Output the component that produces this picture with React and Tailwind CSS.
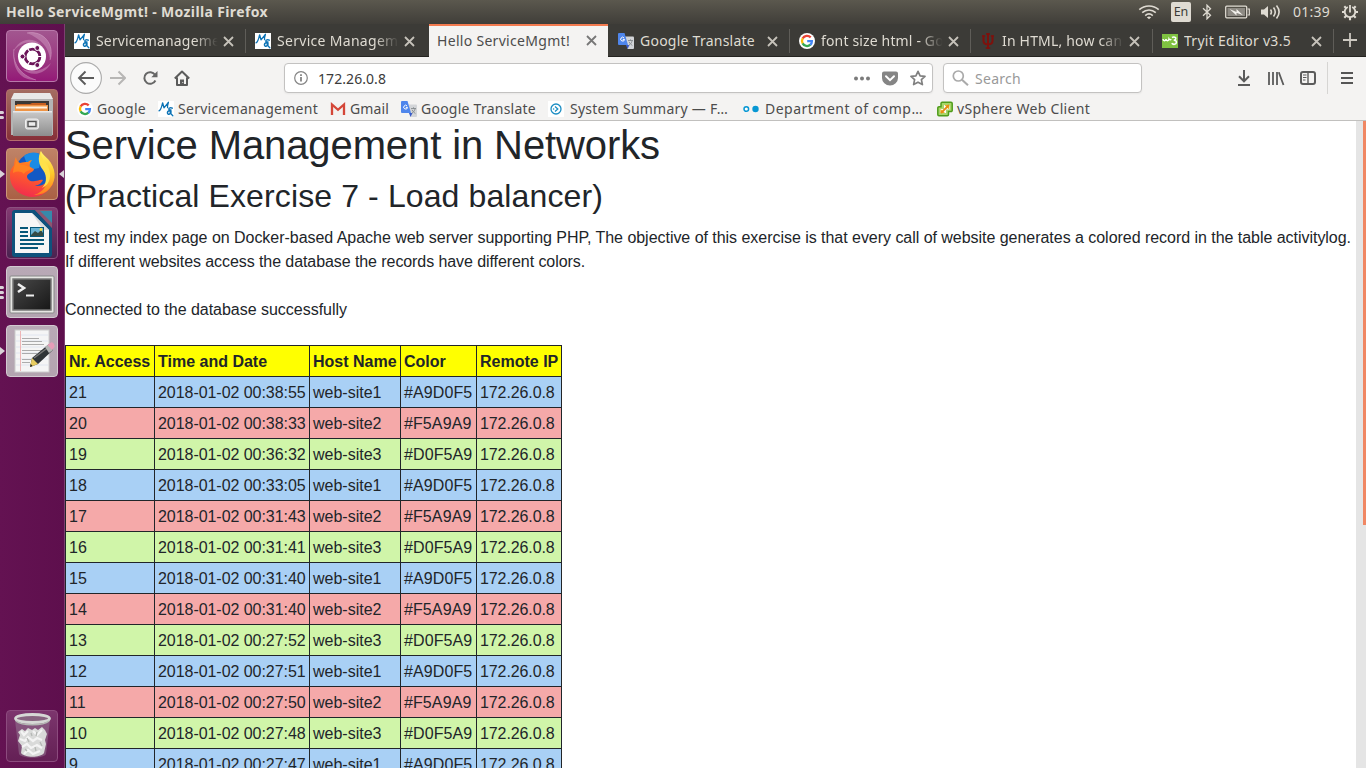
import React, { useLayoutEffect, useRef, useState } from 'react';

/* Label whose tracking is adjusted so that it fills a given width. */
function Fit({ w, className = '', children }) {
  const ref = useRef(null);
  const [spacing, setSpacing] = useState(0);
  useLayoutEffect(() => {
    const natural = ref.current.getBoundingClientRect().width;
    setSpacing((w - natural) / String(children).length);
  }, []);
  return (
    <span ref={ref} className={`inline-block shrink-0 whitespace-pre ${className}`} style={{ letterSpacing: spacing }}>
      {children}
    </span>
  );
}

function MrIcon() {
  return (
    <svg width="16" height="16" viewBox="0 0 16 16" className="shrink-0">
      <rect width="16" height="16" fill="#fff" />
      <g fill="none" stroke="#0b72b5" strokeLinecap="round" strokeLinejoin="round">
        <path d="M1 9.800C2.600 9.300 4 4.500 4.600 1.800L6 6.800 10.400 1.300C9.700 3.500 9.200 5 9.600 6.600" strokeWidth="1.300" />
        <path d="M14.300 7.200c-1.700-1-3.600-.2-3.500.9.100.8 1.300 1 2.200.9-1.700.3-3.400 1.200-3.600 2.700-.2 1.800 1.800 2 2.900.9 1-1 1-2.500.200-2.600-.9 0-.3 2.700 2.300 4.800" strokeWidth="1.400" />
      </g>
    </svg>
  );
}

function GoogleIcon() {
  return (
    <svg width="16" height="16" viewBox="0 0 16 16" className="shrink-0">
      <circle cx="8" cy="8" r="8" fill="#fff" />
      <g fill="none" strokeWidth="2.300">
        <path d="M3.600 5.500A5 5 0 0 1 11.700 4.400" stroke="#ea4335" />
        <path d="M3.700 10.500A5 5 0 0 1 3.700 5.400" stroke="#fbbc05" />
        <path d="M11.400 11.700A5 5 0 0 1 3.600 10.400" stroke="#34a853" />
        <path d="M8.200 8.200H12.900C12.900 9.700 12.300 10.900 11.300 11.800" stroke="#4285f4" />
      </g>
    </svg>
  );
}

function TranslateIcon() {
  return (
    <svg width="16" height="16" viewBox="0 0 16 16" className="shrink-0">
      <path d="M7 3.500h8a1 1 0 0 1 1 1V15a1 1 0 0 1-1 1H9.500z" fill="#d3d5d8" />
      <path d="M9.500 16 8 12h3.500z" fill="#3a5bc7" />
      <path d="M1 0h5.500L10 12H1a1 1 0 0 1-1-1V1a1 1 0 0 1 1-1z" fill="#4f86ec" />
      <path d="M6.100 5A1.900 1.900 0 1 0 6.500 6.400H4.800" fill="none" stroke="#fff" strokeWidth="1" />
      <path d="M10 7.500h5M12.500 6.300v1.200M14.200 7.600c-.5 2.200-2 3.800-3.300 4.500M11 8.800c.7 1.600 2 2.900 3.400 3.700" fill="none" stroke="#7c8185" strokeWidth=".8" />
    </svg>
  );
}

function TridentIcon() {
  return (
    <svg width="16" height="16" viewBox="0 0 16 16" className="shrink-0">
      <g fill="none" stroke="#7d110c" strokeWidth="2">
        <path d="M8 0v16M3.500 2.500v5.200c0 2.600 1.300 3.600 4.500 3.600s4.500-1 4.500-3.600V2.500" />
        <path d="M2 3h3.200M10.800 3H14M6 1h4M5.800 15h4.400" strokeWidth="1.600" />
      </g>
    </svg>
  );
}

function W3Icon() {
  return (
    <svg width="16" height="16" viewBox="0 0 16 16" className="shrink-0">
      <rect y="1" width="16" height="14" fill="#7fc241" />
      <path d="M1 6c.2 2.200 2.700 2.200 3 .2.300 2 2.700 2 3-.2 .5 1 1.700.8 2.300.200" fill="none" stroke="#fff" strokeWidth="1.500" />
      <path d="M10 4.500c2-1 4.300-.3 3.700 1.500-.4 1-1.400 1.200-2 1.200 1.300 0 2.900.5 2.700 2.300-.3 2.200-3.300 2.400-4.700.8" fill="none" stroke="#fff" strokeWidth="1.600" />
    </svg>
  );
}

function Close({ dark }) {
  return (
    <svg width="11" height="11" viewBox="0 0 11 11" className="shrink-0">
      <path d="M1 1l9 9M10 1l-9 9" stroke={dark ? '#777' : '#c6c2ba'} strokeWidth="1.800" fill="none" />
    </svg>
  );
}

const tabs = [
  { t: 'Servicemanagement', n: 138, icon: <MrIcon />, cls: 'w-[181px] pl-[9px] border-r border-[#5f5d58]' },
  { t: 'Service Management', n: 144, icon: <MrIcon />, cls: 'w-[183px] pl-[9px]' },
  { t: 'Hello ServiceMgmt!', n: 133, active: true, cls: 'w-[179px] pl-2' },
  { t: 'Google Translate', n: 115, icon: <TranslateIcon />, cls: 'w-[182px] pl-[10px] border-r border-[#5f5d58]' },
  { t: 'font size html - Google', n: 152, icon: <GoogleIcon />, cls: 'w-[181px] pl-[9px] border-r border-[#5f5d58]' },
  { t: 'In HTML, how can I', n: 129, icon: <TridentIcon />, cls: 'w-[182px] pl-[9px] border-r border-[#5f5d58]' },
  { t: 'Tryit Editor v3.5', n: 107, icon: <W3Icon />, cls: 'w-[181px] pl-[9px] border-r border-[#5f5d58]' },
];

function Tab({ tab }) {
  if (tab.active) {
    return (
      <div className={`flex h-[33px] shrink-0 items-center border-t-2 border-[#f37b50] bg-[#f4f3f2] pr-[11px] pb-[2px] text-[#4c4c4c] ${tab.cls}`}>
        <div className="w-[150px]"><Fit w={tab.n}>{tab.t}</Fit></div>
        <Close dark />
      </div>
    );
  }
  const faded = tab.n > 120;
  return (
    <div className={`mt-[5px] flex h-6 shrink-0 items-center text-[#dfdbd2] ${tab.cls}`}>
      {tab.icon}
      <div className={`mr-1 ml-[6px] w-[123px] overflow-hidden ${faded ? '[mask-image:linear-gradient(to_right,#000_80%,transparent_99%)]' : ''}`}>
        <Fit w={tab.n}>{tab.t}</Fit>
      </div>
      <Close />
    </div>
  );
}

function SystemBar() {
  return (
    <header className="flex h-6 shrink-0 items-center bg-linear-to-b from-[#5b584e] to-[#403e39] pl-[6px] text-[#dfdbd2]">
      <Fit w={262} className="text-[14px] font-bold">Hello ServiceMgmt! - Mozilla Firefox</Fit>
      <div className="ml-auto flex h-6 items-center">
        <svg width="22" height="18" viewBox="0 0 22 18" className="mr-[11px]">
          <g fill="none" stroke="#dfdbd2" strokeWidth="1.600">
            <path d="M1.300 6.700C6.500 1.700 15.500 1.700 20.700 6.700M4.200 9.700c4-3.700 9.600-3.700 13.600 0M7.200 12.600c2.300-2 5.300-2 7.600 0" />
          </g>
          <path d="M8.800 14.300c1.500-1 2.900-1 4.400 0L11 16.300z" fill="#dfdbd2" />
        </svg>
        <div className="mr-[11px] flex h-5 w-5 items-center justify-center rounded-[2px] bg-[#dfdbd2] text-[12.500px] text-[#3c3b37]">En</div>
        <svg width="10" height="16" viewBox="0 0 10 16" className="mr-[13px]">
          <path d="M1 4.300l7.500 7L5 14.800V1.200l3.500 3.500-7.500 7" fill="none" stroke="#dfdbd2" strokeWidth="1.300" />
        </svg>
        <svg width="25" height="14" viewBox="0 0 25 14" className="mr-[10px]">
          <rect x=".7" y="1.200" width="21" height="11.600" rx="1" fill="none" stroke="#dfdbd2" strokeWidth="1.300" />
          <rect x="2.500" y="3" width="17.500" height="8" fill="#8d8a83" />
          <path d="M22.500 4h1.800v6h-1.800" fill="none" stroke="#dfdbd2" strokeWidth="1.200" />
          <path d="M4.500 4l7 3V4l6.500 6.300-6.500-2.600V10.500z" fill="#f3f1ec" />
        </svg>
        <svg width="21" height="16" viewBox="0 0 21 16" className="mr-[12px]">
          <path d="M1 5.500h3L8 2v12l-4-3.500H1z" fill="#dfdbd2" />
          <g fill="none" stroke="#dfdbd2" strokeWidth="1.600"><path d="M10.500 5.500c1.200 1.600 1.200 3.400 0 5M13.500 3.500c2.200 2.800 2.200 6.200 0 9M16.500 1.500c3.200 4 3.200 9 0 13" /></g>
        </svg>
        <Fit w={37} className="mr-[11px] text-[14px]">01:39</Fit>
        <svg width="18" height="18" viewBox="0 0 18 18" className="mr-[7px]">
          <path d="M6.800 4A5.300 5.300 0 1 0 11.200 4" fill="none" stroke="#dfdbd2" strokeWidth="1.900" />
          <path d="M9 2v7.500" stroke="#dfdbd2" strokeWidth="1.800" />
          <path d="M1 9h3M14 9h3M9 14v3.200M3.300 3.300l2.200 2.200M14.700 3.300l-2.200 2.200M3.300 14.700l2.200-2.200M14.700 14.700l-2.200-2.200" stroke="#dfdbd2" strokeWidth="2.100" />
        </svg>
      </div>
    </header>
  );
}

const tile = 'flex h-[52px] w-[52px] shrink-0 items-center justify-center overflow-hidden rounded-[4px] border';

function Arrow({ left }) {
  return (
    <svg width="5" height="8" viewBox="0 0 5 8" className="shrink-0">
      <path d={left ? 'M5 0v8L0 4z' : 'M0 0v8l5-4z'} fill="#d9d3d8" />
    </svg>
  );
}

function Pips({ n }) {
  return (
    <div className="flex w-[5px] shrink-0 flex-col gap-[2px]">
      {Array.from({ length: n }, (_, i) => <div key={i} className="h-[3px] w-[4px] rounded-r-full bg-[#d9d3d8]" />)}
    </div>
  );
}

function Slot({ mark, end, children }) {
  return (
    <div className="flex h-[52px] w-16 shrink-0 items-center">
      <div className="w-[6px]">{mark}</div>
      {children}
      <div className="flex w-[6px] justify-end">{end}</div>
    </div>
  );
}

function Launcher() {
  return (
    <aside className="flex w-[65px] shrink-0 flex-col gap-[7px] border-r border-[#7d3f70] bg-linear-to-r from-[#641252] to-[#5e0f4d] pt-[6px] pb-[6px]">
      <Slot>
        <div className={`${tile} border-[#b878aa] bg-linear-to-b from-[#a2568f] to-[#941877]`}>
          <svg width="50" height="50" viewBox="0 0 50 50">
            <path d="M20 2c17-3 28 12 23 27-1-13-9-21-23-27zM7 18c-2 14 6 26 22 31C14 50 4 38 7 18zM6 21C12 8 24 5 35 14 24 9 13 11 6 21zM44 32C38 44 24 46 15 38c11 4 21 2 29-6z" fill="#dca9ce" opacity=".42" />
            <path d="M20 2c17-3 28 12 23 27M7 18c-2 14 6 26 22 31" fill="none" stroke="#d9a6cc" opacity=".5" />
            <circle cx="25" cy="25.500" r="14" fill="#fff" />
            <circle cx="25.500" cy="25.500" r="7.400" fill="none" stroke="#6b1559" strokeWidth="2.900" />
            <path d="M25.500 25.500H35M25.500 25.500L20.700 17.500M25.500 25.500L20.700 34" stroke="#fff" strokeWidth="1.200" />
            <circle cx="25.500" cy="25.500" r="5.500" fill="#fff" />
            <g fill="#6b1559" stroke="#fff" strokeWidth="1"><circle cx="15.500" cy="25.500" r="2.500" /><circle cx="30.300" cy="17" r="2.500" /><circle cx="30.300" cy="34" r="2.500" /></g>
          </svg>
        </div>
      </Slot>
      <Slot mark={<Pips n={2} />}>
        <div className={`${tile} border-[#b66d6d] bg-linear-to-b from-[#a46d62] to-[#862f38]`}>
          <svg width="50" height="50" viewBox="0 0 50 50">
            <defs><linearGradient id="cab" x2="0" y2="1"><stop stopColor="#cacaca" /><stop offset="1" stopColor="#8d8d8d" /></linearGradient></defs>
            <path d="M7 3h36l3 7v35H4V10z" fill="#b4b4b4" /><path d="M7 3h36l3 6H4z" fill="#e9e9e9" />
            <rect x="8" y="11" width="34" height="12" fill="#3b3835" />
            <path d="M10 14h13l2-1h14v7H10z" fill="#c65f20" /><path d="M8 15h33v6H8z" fill="#ee9445" /><path d="M9 16.500h31v2H9z" fill="#fff1df" />
            <path d="M6 21h39v25H6z" fill="url(#cab)" /><path d="M6 21h39v1.500H6z" fill="#e8e8e8" />
            <rect x="18.500" y="29" width="13" height="10" rx="2" fill="#d8d8d8" stroke="#eee" />
            <rect x="21" y="31.500" width="8" height="5" fill="#ececec" stroke="#555" strokeWidth="1.400" />
          </svg>
        </div>
      </Slot>
      <Slot mark={<Arrow />} end={<Arrow left />}>
        <div className={`${tile} border-[#cb9678] bg-linear-to-b from-[#bf8367] to-[#aa6045]`}>
          <svg width="50" height="50" viewBox="0 0 50 50">
            <defs>
              <linearGradient id="fox" x1=".6" y1="0" x2=".3" y2="1"><stop stopColor="#ff981e" /><stop offset=".45" stopColor="#ff5d2a" /><stop offset="1" stopColor="#f02a50" /></linearGradient>
              <linearGradient id="tail" x2="0" y2="1"><stop stopColor="#fff36b" /><stop offset=".5" stopColor="#ffcb2b" /><stop offset="1" stopColor="#ff7b20" /></linearGradient>
            </defs>
            <circle cx="27" cy="22" r="18" fill="#1259c4" />
            <path d="M17 7c7-5 14-4 18 0l-3 12-10 2z" fill="#1b8be4" />
            <path d="M9 8c0 3 2 5 4 6 3-1 5-1 8-1 1-1 2-2 4-2-2 2-3 5-2 7l4 2c0 3-6 4-7 7 0 4 4 6 8 5 3 0 5-2 8-1-2 4-5 5-8 6 9 1 15-5 15-14l3 12C41 43 34 48 25 48 12 47 2 38 3 25c0-5 3-7 4-9 0-3 1-6 2-8z" fill="url(#fox)" />
            <path d="M34 2c1 3 4 5 7 8 8 9 9 21 2 29-4 5-10 7-16 7 10-3 15-11 12-21-2-6-10-12-5-23z" fill="url(#tail)" />
            <path d="M34 2c-4 7-2 14 2 19 5 7 3 14-1 18 9-4 9-13 7-19-2-7-9-10-8-18z" fill="#ffe14a" />
            <path d="M10 11c1 4 3 5 7 5l8 3c-3 3-7 3-8 6-3-3-7-3-11-1 0-5 2-8 4-13z" fill="#ff8a20" opacity=".8" />
          </svg>
        </div>
      </Slot>
      <Slot>
        <div className={`${tile} border-[#8c5080] bg-linear-to-b from-[#843b72] to-[#4a2350]`}>
          <svg width="50" height="50" viewBox="0 0 50 50">
            <path d="M8 2h20l17 18v26a3 3 0 0 1-3 3H8a3 3 0 0 1-3-3V5a3 3 0 0 1 3-3z" fill="#0e527c" />
            <path d="M28 2h17v18z" fill="#8c5570" /><path d="M33 3h12v12z" fill="#3789aa" />
            <path d="M8 5h17l17 17v23H8z" fill="#f6f6f6" />
            <path d="M25 5l17 17H36z" fill="#ddd" />
            <path d="M13 20h8M13 24h8M13 28h8M13 32h24M13 36h24M13 40h18" stroke="#075879" strokeWidth="2" />
            <rect x="23" y="19" width="14" height="10" fill="#075879" /><rect x="24" y="20" width="12" height="8" fill="#6ab3d4" />
            <path d="M24 27l4-4 3 2 3-3 2 3v3H24z" fill="#354b46" /><circle cx="34" cy="21.500" r="1.400" fill="#f5dd49" />
          </svg>
        </div>
      </Slot>
      <Slot mark={<Pips n={3} />}>
        <div className={`${tile} border-[#d3c9d1] bg-linear-to-b from-[#b9a9b6] to-[#b3a4b0]`}>
          <svg width="50" height="50" viewBox="0 0 50 50">
            <defs><linearGradient id="term" x2="1" y2="1"><stop stopColor="#484848" /><stop offset=".5" stopColor="#303030" /><stop offset="1" stopColor="#171717" /></linearGradient></defs>
            <rect x="3" y="9" width="44" height="37" rx="1" fill="#e6e6e3" stroke="#888" />
            <rect x="6" y="12" width="38" height="31" fill="url(#term)" stroke="#777" strokeWidth="1.500" />
            <path d="M11 17l6 4-6 4" fill="none" stroke="#eee" strokeWidth="2.600" /><path d="M19 28.500h8" stroke="#eee" strokeWidth="2.200" />
          </svg>
        </div>
      </Slot>
      <Slot mark={<Arrow />}>
        <div className={`${tile} border-[#d3c9d1] bg-linear-to-b from-[#b9a9b6] to-[#b3a4b0]`}>
          <svg width="50" height="50" viewBox="0 0 50 50">
            <rect x="8" y="4" width="34" height="42" fill="#f5f5f5" stroke="#ccc" />
            <path d="M9 9h32M9 15h32M9 21h32M9 27h32M9 33h32M9 39h32" stroke="#dae1ee" strokeWidth=".8" /><path d="M13.500 5v40" stroke="#eeb5b5" />
            <path d="M15 12.500h17M15 15.500h20M15 18.500h22M15 24.500h20M15 27.500h15M15 33.500h9M15 36.500h8" stroke="#999" strokeWidth=".8" />
            <path d="M23 41l2-9 17-14 4 6-15 14z" fill="#2f3437" /><path d="M27 32l16-12" stroke="#777" strokeWidth="1.500" />
            <path d="M23 41l2-9 6 6z" fill="#e8cd61" /><path d="M23 41l.7-3 2 2z" fill="#222" />
            <path d="M38 21l4-3 4 6-4 3z" fill="#b5b5b5" /><path d="M40.500 19l3.500-2.500c2-1 4 3 3.500 4.500L45 24z" fill="#e69cb8" />
          </svg>
        </div>
      </Slot>
      <div className="mt-auto">
        <Slot>
          <div className={`${tile} border-[#8c4b7e] bg-linear-to-b from-[#7c356d] to-[#642055]`}>
            <svg width="50" height="50" viewBox="0 0 50 50">
              <path d="M8 9l4 34c3 5 24 5 27 0l4-34z" fill="#977c95" opacity=".5" />
              <path d="M11 21l4-3 3 2 3-3 4 2 3-2 3 2 4-3 3 3 2 4-2 6 1 4-2 9c-4 5-19 5-23 0l1-7-4-5 2-6z" fill="#d9dad9" />
              <path d="M14 20l3 4 4-4M26 20l4 4 5-5M13 28l5 2 3-4 5 4 4-3 5 2M15 36l5-3 4 4 6-3 5 3M17 43l4-4 5 4 7-3" fill="none" stroke="#f4f4f4" strokeWidth="2.200" />
              <path d="M20 27l2 4M30 21l-1 4M33 31l2 4M18 38l2 2M28 36l1 4M24 22l1 3" fill="none" stroke="#b4b7b4" strokeWidth="1.300" />
              <ellipse cx="25.500" cy="7.500" rx="17" ry="4" fill="#87637f" stroke="#d6d8d5" strokeWidth="2.800" />
              <path d="M9 10c6 5 27 5 33 0" fill="none" stroke="#b5b8b4" strokeWidth="1.600" />
            </svg>
          </div>
        </Slot>
      </div>
    </aside>
  );
}

function NavBar() {
  return (
    <div className="flex h-[42px] items-center pl-[5px]">
      <svg width="32" height="32" viewBox="0 0 32 32">
        <circle cx="16" cy="16" r="15.400" fill="#fbfbfb" stroke="#aaa" strokeWidth="1.100" />
        <path d="M24 16H9.500M15.500 9.500L9 16l6.500 6.500" fill="none" stroke="#5b5b5b" strokeWidth="1.900" />
      </svg>
      <svg width="16" height="16" viewBox="0 0 16 16" className="ml-2">
        <path d="M0 8h14.500M8.500 1.500L15 8l-6.500 6.500" fill="none" stroke="#b7b6b5" strokeWidth="2" />
      </svg>
      <svg width="16" height="16" viewBox="0 0 16 16" className="ml-4">
        <path d="M13 4.800A5.800 5.800 0 1 0 13.400 10.500" fill="none" stroke="#666" strokeWidth="2" />
        <path d="M15.500 1V7.200H9.300z" fill="#666" />
      </svg>
      <svg width="16" height="16" viewBox="0 0 16 16" className="ml-4">
        <path d="M.8 8.500L8 1.500l7.200 7M3 7.500V15h10V7.500" fill="none" stroke="#5b5b5b" strokeWidth="2" strokeLinejoin="round" />
        <path d="M6 9.500h4V15H6z" fill="#5b5b5b" /><path d="M8.400 12h.8v1h-.8z" fill="#fff" />
      </svg>
      <div className="ml-[94px] flex h-[30px] w-[649px] items-center rounded-[4px] border border-[#c3c2c1] bg-white shadow-xs">
        <svg width="14" height="14" viewBox="0 0 14 14" className="ml-[9px]">
          <circle cx="7" cy="7" r="6.300" fill="none" stroke="#858585" strokeWidth="1.200" />
          <path d="M7 6v4.500M7 3.200v1.700" stroke="#737373" strokeWidth="1.600" />
        </svg>
        <Fit w={68} className="mt-px ml-[10px] text-[#3b3b3b]">172.26.0.8</Fit>
        <svg width="16" height="5" viewBox="0 0 16 5" className="ml-auto"><g fill="#7b7b7b"><circle cx="2" cy="2.500" r="2" /><circle cx="8" cy="2.500" r="2" /><circle cx="14" cy="2.500" r="2" /></g></svg>
        <svg width="16" height="15" viewBox="0 0 16 15" className="ml-3">
          <path d="M2 .5h12a2 2 0 0 1 2 2v4.500a8 7.500 0 0 1-16 0V2.500a2 2 0 0 1 2-2z" fill="#858585" />
          <path d="M4 5.300l4 3.800 4-3.800" fill="none" stroke="#fff" strokeWidth="2" strokeLinecap="round" />
        </svg>
        <svg width="16" height="16" viewBox="0 0 16 16" className="mr-[6px] ml-3">
          <path d="M8 1.300l2.100 4.500 4.900.6-3.600 3.300 1 4.900L8 12.200l-4.400 2.400 1-4.900L1 6.400l4.900-.6z" fill="none" stroke="#808080" strokeWidth="1.700" strokeLinejoin="round" />
        </svg>
      </div>
      <div className="ml-[10px] flex h-[30px] w-[199px] items-center rounded-[4px] border border-[#c3c2c1] bg-white shadow-xs">
        <svg width="17" height="16" viewBox="0 0 17 16" className="ml-2">
          <circle cx="6.300" cy="6" r="5" fill="none" stroke="#aaa" strokeWidth="1.700" /><path d="M10 9.700l6 5.600" stroke="#aaa" strokeWidth="2" />
        </svg>
        <Fit w={46} className="mt-px ml-[6px] text-[#999]">Search</Fit>
      </div>
      <svg width="14" height="16" viewBox="0 0 14 16" className="ml-[95px]">
        <path d="M7 0v11M2 6.300l5 5 5-5M1 15h12" fill="none" stroke="#5b5b5b" strokeWidth="2" />
      </svg>
      <svg width="17" height="15" viewBox="0 0 17 15" className="ml-[17px]">
        <path d="M1 1v13M5 1v13M9 1v13M10.800 1.200L15.500 14" fill="none" stroke="#5b5b5b" strokeWidth="1.800" />
      </svg>
      <svg width="16" height="14" viewBox="0 0 16 14" className="ml-[15px]">
        <rect x="1" y="1" width="14" height="12" rx="2" fill="none" stroke="#5b5b5b" strokeWidth="2" />
        <path d="M8 1v12" stroke="#5b5b5b" strokeWidth="1.400" /><path d="M3 4h3.500M3 6.500h3.500M3 9h2.500" stroke="#5b5b5b" />
      </svg>
      <div className="ml-[11px] h-8 w-px bg-[#d6d5d3]" />
      <svg width="12" height="14" viewBox="0 0 12 14" className="ml-[13px]"><path d="M0 2h12M0 7h12M0 12h12" stroke="#555" strokeWidth="2" /></svg>
    </div>
  );
}

function Bookmarks() {
  return (
    <div className="flex h-[19px] items-center pl-3 text-[#4c4c4c]">
      <GoogleIcon />
      <Fit w={49} className="ml-1">Google</Fit>
      <div className="ml-3"><MrIcon /></div>
      <Fit w={140} className="ml-1">Servicemanagement</Fit>
      <svg width="16" height="16" viewBox="0 0 16 16" className="ml-3 shrink-0">
        <path d="M1 3h14v11H1z" fill="#f3f1ef" />
        <path d="M2 14V3.500l6 5.300 6-5.300V14" fill="none" stroke="#d44638" strokeWidth="2.300" />
      </svg>
      <Fit w={39} className="ml-1">Gmail</Fit>
      <div className="ml-[12px]"><TranslateIcon /></div>
      <Fit w={115} className="ml-1">Google Translate</Fit>
      <svg width="16" height="16" viewBox="0 0 16 16" className="ml-3 shrink-0">
        <rect width="16" height="16" fill="#fff" /><circle cx="8" cy="8" r="5" fill="none" stroke="#1b8dc3" strokeWidth="1.300" />
        <path d="M7 5.400L9.800 8 7 10.600" fill="none" stroke="#1b8dc3" strokeWidth="1.300" />
        <circle cx="5.600" cy="8" r=".8" fill="#1b8dc3" />
      </svg>
      <Fit w={158} className="ml-[6px]">System Summary — F…</Fit>
      <svg width="16" height="16" viewBox="0 0 16 16" className="ml-[15px] shrink-0">
        <circle cx="3.300" cy="8" r="2.300" fill="#fff" stroke="#0797d3" strokeWidth="1.500" /><circle cx="12.500" cy="8" r="3.200" fill="#0797d3" />
      </svg>
      <Fit w={158} className="ml-[6px]">Department of comp…</Fit>
      <svg width="16" height="16" viewBox="0 0 16 16" className="ml-[14px] shrink-0">
        <path d="M5 1.200h9a1.200 1.200 0 0 1 1.200 1.200v7a1.200 1.200 0 0 1-1.200 1.200h-2.500v3a1.200 1.200 0 0 1-1.200 1.200H2a1.200 1.200 0 0 1-1.200-1.200V7A1.200 1.200 0 0 1 2 5.800h2V2.400A1.200 1.200 0 0 1 5 1.200z" fill="#a7d66a" stroke="#4f9c1b" strokeWidth="1.500" />
        <path d="M7 4h5.500v4.500H9v3.500H3.500V8H7z" fill="#fff" />
        <path d="M7.500 4H12v4.500zM3.500 8v4H8z" fill="#f3a61f" /><path d="M4 12l8-8" stroke="#e58b15" strokeWidth="1.800" />
      </svg>
      <Fit w={133} className="ml-1">vSphere Web Client</Fit>
    </div>
  );
}

const sites = {
  1: ['web-site1', '#A9D0F5', 'bg-[#A9D0F5]'],
  2: ['web-site2', '#F5A9A9', 'bg-[#F5A9A9]'],
  3: ['web-site3', '#D0F5A9', 'bg-[#D0F5A9]'],
};
const log = [
  [21, '00:38:55', 1], [20, '00:38:33', 2], [19, '00:36:32', 3], [18, '00:33:05', 1],
  [17, '00:31:43', 2], [16, '00:31:41', 3], [15, '00:31:40', 1], [14, '00:31:40', 2],
  [13, '00:27:52', 3], [12, '00:27:51', 1], [11, '00:27:50', 2], [10, '00:27:48', 3], [9, '00:27:47', 1],
];
const cell = 'border border-[#212529] px-[3px] pt-1 pb-[2px] whitespace-nowrap';

function Page() {
  return (
    <main className="flex h-[647px] overflow-hidden bg-white font-['Liberation_Sans',Arial,sans-serif] text-base leading-6 text-[#212529]">
      <div className="min-w-0 flex-1">
        <h1 className="mb-2 flex text-[40px] leading-[48px]"><Fit w={595}>Service Management in Networks</Fit></h1>
        <h2 className="mb-[11px] flex text-[32px] leading-[38px]"><Fit w={538}>(Practical Exercise 7 - Load balancer)</Fit></h2>
        <p className="flex flex-col items-start">
          <Fit w={1286}>I test my index page on Docker-based Apache web server supporting PHP, The objective of this exercise is that every call of website generates a colored record in the table activitylog.</Fit>
          <Fit w={520}>If different websites access the database the records have different colors.</Fit>
        </p>
        <p className="mt-6 flex"><Fit w={282}>Connected to the database successfully</Fit></p>
        <table className="mt-[23px] w-[497px] table-fixed border-collapse text-left">
          <colgroup><col className="w-[89px]" /><col className="w-[155px]" /><col className="w-[91px]" /><col className="w-[76px]" /><col className="w-[85px]" /></colgroup>
          <thead>
            <tr className="bg-[#ffff00]">
              {['Nr. Access', 'Time and Date', 'Host Name', 'Color', 'Remote IP'].map((h) => <th key={h} className={`${cell} font-bold`}>{h}</th>)}
            </tr>
          </thead>
          <tbody>
            {log.map(([nr, time, s]) => (
              <tr key={nr} className={sites[s][2]}>
                <td className={cell}>{nr}</td>
                <td className={`${cell} tracking-[-0.05px]`}>2018-01-02 {time}</td>
                <td className={cell}>{sites[s][0]}</td>
                <td className={`${cell} tracking-[0.1px]`}>{sites[s][1]}</td>
                <td className={`${cell} tracking-[-0.1px]`}>172.26.0.8</td>
              </tr>
            ))}
          </tbody>
        </table>
      </div>
      <div className="flex w-[10px] shrink-0 justify-end bg-[#e5e5e5]"><div className="h-[404px] w-[3px] bg-[#f08763]" /></div>
    </main>
  );
}

export default function App() {
  return (
    <div className="flex h-[768px] w-[1366px] flex-col overflow-hidden font-['Noto_Sans',sans-serif] text-[14px] leading-5">
      <SystemBar />
      <div className="flex h-[744px]">
        <Launcher />
        <div className="flex w-[1301px] flex-col">
          <nav className="flex h-[33px] shrink-0 bg-[#3c3b37] shadow-[inset_0_-1px_0_#242320]">
            {tabs.map((t) => <Tab key={t.t} tab={t} />)}
            <svg width="14" height="14" viewBox="0 0 14 14" className="mt-[9px] ml-[9px]"><path d="M7 0v14M0 7h14" stroke="#cdc9c1" strokeWidth="1.800" /></svg>
          </nav>
          <div className="h-16 shrink-0 border-b border-[#c1c0be] bg-[#f4f3f2]">
            <NavBar />
            <Bookmarks />
          </div>
          <Page />
        </div>
      </div>
    </div>
  );
}
